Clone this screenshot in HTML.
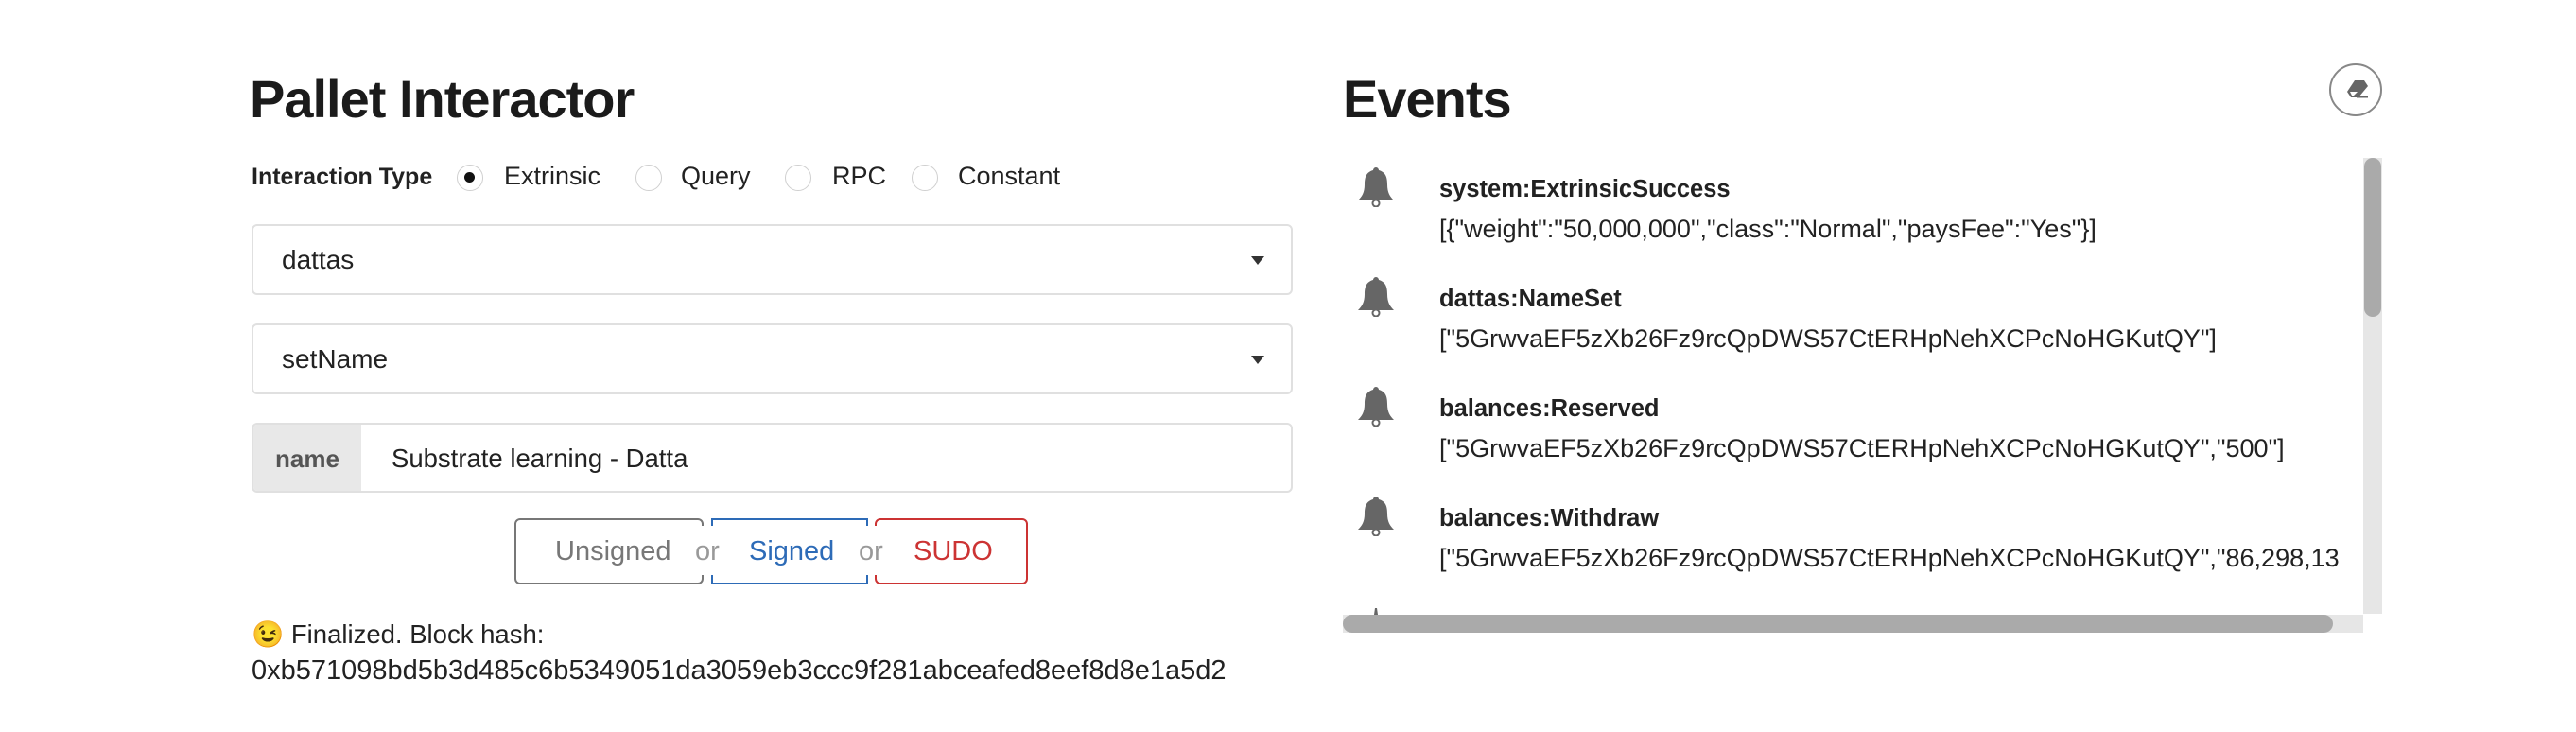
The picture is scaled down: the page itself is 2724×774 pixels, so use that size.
<!DOCTYPE html>
<html><head><meta charset="utf-8"><style>
*{box-sizing:border-box;margin:0;padding:0}
body{width:2724px;height:774px;background:#fff;font-family:"Liberation Sans",sans-serif;color:#222;position:relative;overflow:hidden}
.abs{position:absolute}
h1{position:absolute;font-size:56px;font-weight:bold;letter-spacing:-1px;color:#1b1b1b}
.radio{position:absolute;width:28px;height:28px;border:1.5px solid #cfcfcf;border-radius:50%;top:174px}
.radio.on::after{content:"";position:absolute;left:7px;top:7px;width:11px;height:11px;border-radius:50%;background:#111}
.lbl{position:absolute;top:171px;font-size:27px;color:#222}
.sel{position:absolute;left:266px;width:1101px;height:75px;border:2px solid #e0e0e0;border-radius:6px;font-size:28px;padding-left:30px;line-height:71px}
.sel::after{content:"";position:absolute;right:28px;top:32px;border-left:7px solid transparent;border-right:7px solid transparent;border-top:9px solid #333}
.btn{position:absolute;top:548px;height:70px;border:2px solid;border-radius:6px}
.bt{position:absolute;top:566px;font-size:29px;line-height:34px}
.ev{position:absolute;left:1522px;font-size:27px}
.ev b{display:block;font-size:25.5px;margin-bottom:12px}
.bell{position:absolute;left:1435px}
</style></head><body>
<h1 style="left:264px;top:72px">Pallet Interactor</h1>
<div class="lbl" style="left:266px;font-weight:bold;font-size:25px;top:173px">Interaction Type</div>
<div class="radio on" style="left:483px"></div><div class="lbl" style="left:533px">Extrinsic</div>
<div class="radio" style="left:672px"></div><div class="lbl" style="left:720px">Query</div>
<div class="radio" style="left:830px"></div><div class="lbl" style="left:880px">RPC</div>
<div class="radio" style="left:964px"></div><div class="lbl" style="left:1013px">Constant</div>
<div class="sel" style="top:237px">dattas</div>
<div class="sel" style="top:342px">setName</div>
<div class="abs" style="left:266px;top:447px;width:1101px;height:74px;border:2px solid #e0e0e0;border-radius:6px;overflow:hidden">
<div class="abs" style="left:0;top:0;width:114px;height:72px;background:#e8e8e8;font-weight:bold;font-size:26px;color:#555;line-height:72px;text-align:center">name</div>
<div class="abs" style="left:146px;top:0;line-height:72px;font-size:27.5px">Substrate learning - Datta</div></div>

<div class="btn" style="left:544px;width:200px;border-color:#777"></div>
<div class="btn" style="left:752px;width:166px;border-color:#2d6bb7;border-radius:0"></div>
<div class="btn" style="left:925px;width:162px;border-color:#cc3333"></div>
<div class="abs" style="left:740px;top:556px;width:16px;height:52px;background:#fff"></div>
<div class="abs" style="left:914px;top:556px;width:16px;height:52px;background:#fff"></div>
<div class="bt" style="left:587px;color:#777">Unsigned</div>
<div class="bt" style="left:735px;color:#999">or</div>
<div class="bt" style="left:792px;color:#2d6bb7">Signed</div>
<div class="bt" style="left:908px;color:#999">or</div>
<div class="bt" style="left:966px;color:#cc3333">SUDO</div>

<div class="abs" style="left:266px;top:654px;font-size:27.5px">😉 Finalized. Block hash:</div>
<div class="abs" style="left:266px;top:693px;font-size:29px">0xb571098bd5b3d485c6b5349051da3059eb3ccc9f281abceafed8eef8d8e1a5d2</div>

<h1 style="left:1420px;top:72px">Events</h1>
<div class="abs" style="left:2463px;top:67px;width:56px;height:56px;border:2px solid #888;border-radius:50%"></div>
<svg class="abs" style="left:2478px;top:82px" width="28" height="26" viewBox="0 0 28 26"><path d="M12 3 L22 3 L26 9 L16 21 L8 21 L4 15 Z" fill="#666"/><rect x="14" y="19" width="12" height="2.5" fill="#666"/><path d="M7 15 L15 15 L11 19 L9 19 Z" fill="#fff"/></svg>

<div class="abs" style="left:2499px;top:167px;width:20px;height:482px;background:#e6e6e6"></div>
<div class="abs" style="left:2500px;top:167px;width:18px;height:168px;background:#aaa;border-radius:9px"></div>
<div class="abs" style="left:1420px;top:650px;width:1079px;height:19px;background:#e6e6e6"></div>
<div class="abs" style="left:1420px;top:650px;width:1047px;height:19px;background:#aaa;border-radius:10px"></div>

<svg class="bell" style="top:177px" width="40" height="42" viewBox="0 0 40 42"><path d="M20 0 C18 0 17 2 17 3 C10 5 8 10 8 18 C8 27 5 31 1 35 L39 35 C35 31 32 27 32 18 C32 10 30 5 23 3 C23 2 22 0 20 0 Z" fill="#666"/><circle cx="20" cy="38" r="3.5" fill="none" stroke="#666" stroke-width="2"/></svg>
<svg class="bell" style="top:293px" width="40" height="42" viewBox="0 0 40 42"><path d="M20 0 C18 0 17 2 17 3 C10 5 8 10 8 18 C8 27 5 31 1 35 L39 35 C35 31 32 27 32 18 C32 10 30 5 23 3 C23 2 22 0 20 0 Z" fill="#666"/><circle cx="20" cy="38" r="3.5" fill="none" stroke="#666" stroke-width="2"/></svg>
<svg class="bell" style="top:409px" width="40" height="42" viewBox="0 0 40 42"><path d="M20 0 C18 0 17 2 17 3 C10 5 8 10 8 18 C8 27 5 31 1 35 L39 35 C35 31 32 27 32 18 C32 10 30 5 23 3 C23 2 22 0 20 0 Z" fill="#666"/><circle cx="20" cy="38" r="3.5" fill="none" stroke="#666" stroke-width="2"/></svg>
<svg class="bell" style="top:525px" width="40" height="42" viewBox="0 0 40 42"><path d="M20 0 C18 0 17 2 17 3 C10 5 8 10 8 18 C8 27 5 31 1 35 L39 35 C35 31 32 27 32 18 C32 10 30 5 23 3 C23 2 22 0 20 0 Z" fill="#666"/><circle cx="20" cy="38" r="3.5" fill="none" stroke="#666" stroke-width="2"/></svg>
<svg class="bell" style="top:641px" width="40" height="9" viewBox="0 0 40 9"><path d="M18 9 L19 2 L21 2 L22 9 Z" fill="#666"/></svg>

<div class="ev" style="top:186px"><b>system:ExtrinsicSuccess</b>[{"weight":"50,000,000","class":"Normal","paysFee":"Yes"}]</div>
<div class="ev" style="top:302px"><b>dattas:NameSet</b>["5GrwvaEF5zXb26Fz9rcQpDWS57CtERHpNehXCPcNoHGKutQY"]</div>
<div class="ev" style="top:418px"><b>balances:Reserved</b>["5GrwvaEF5zXb26Fz9rcQpDWS57CtERHpNehXCPcNoHGKutQY","500"]</div>
<div class="ev" style="top:534px;width:977px;overflow:hidden;white-space:nowrap"><b>balances:Withdraw</b>["5GrwvaEF5zXb26Fz9rcQpDWS57CtERHpNehXCPcNoHGKutQY","86,298,13</div>
</body></html>
